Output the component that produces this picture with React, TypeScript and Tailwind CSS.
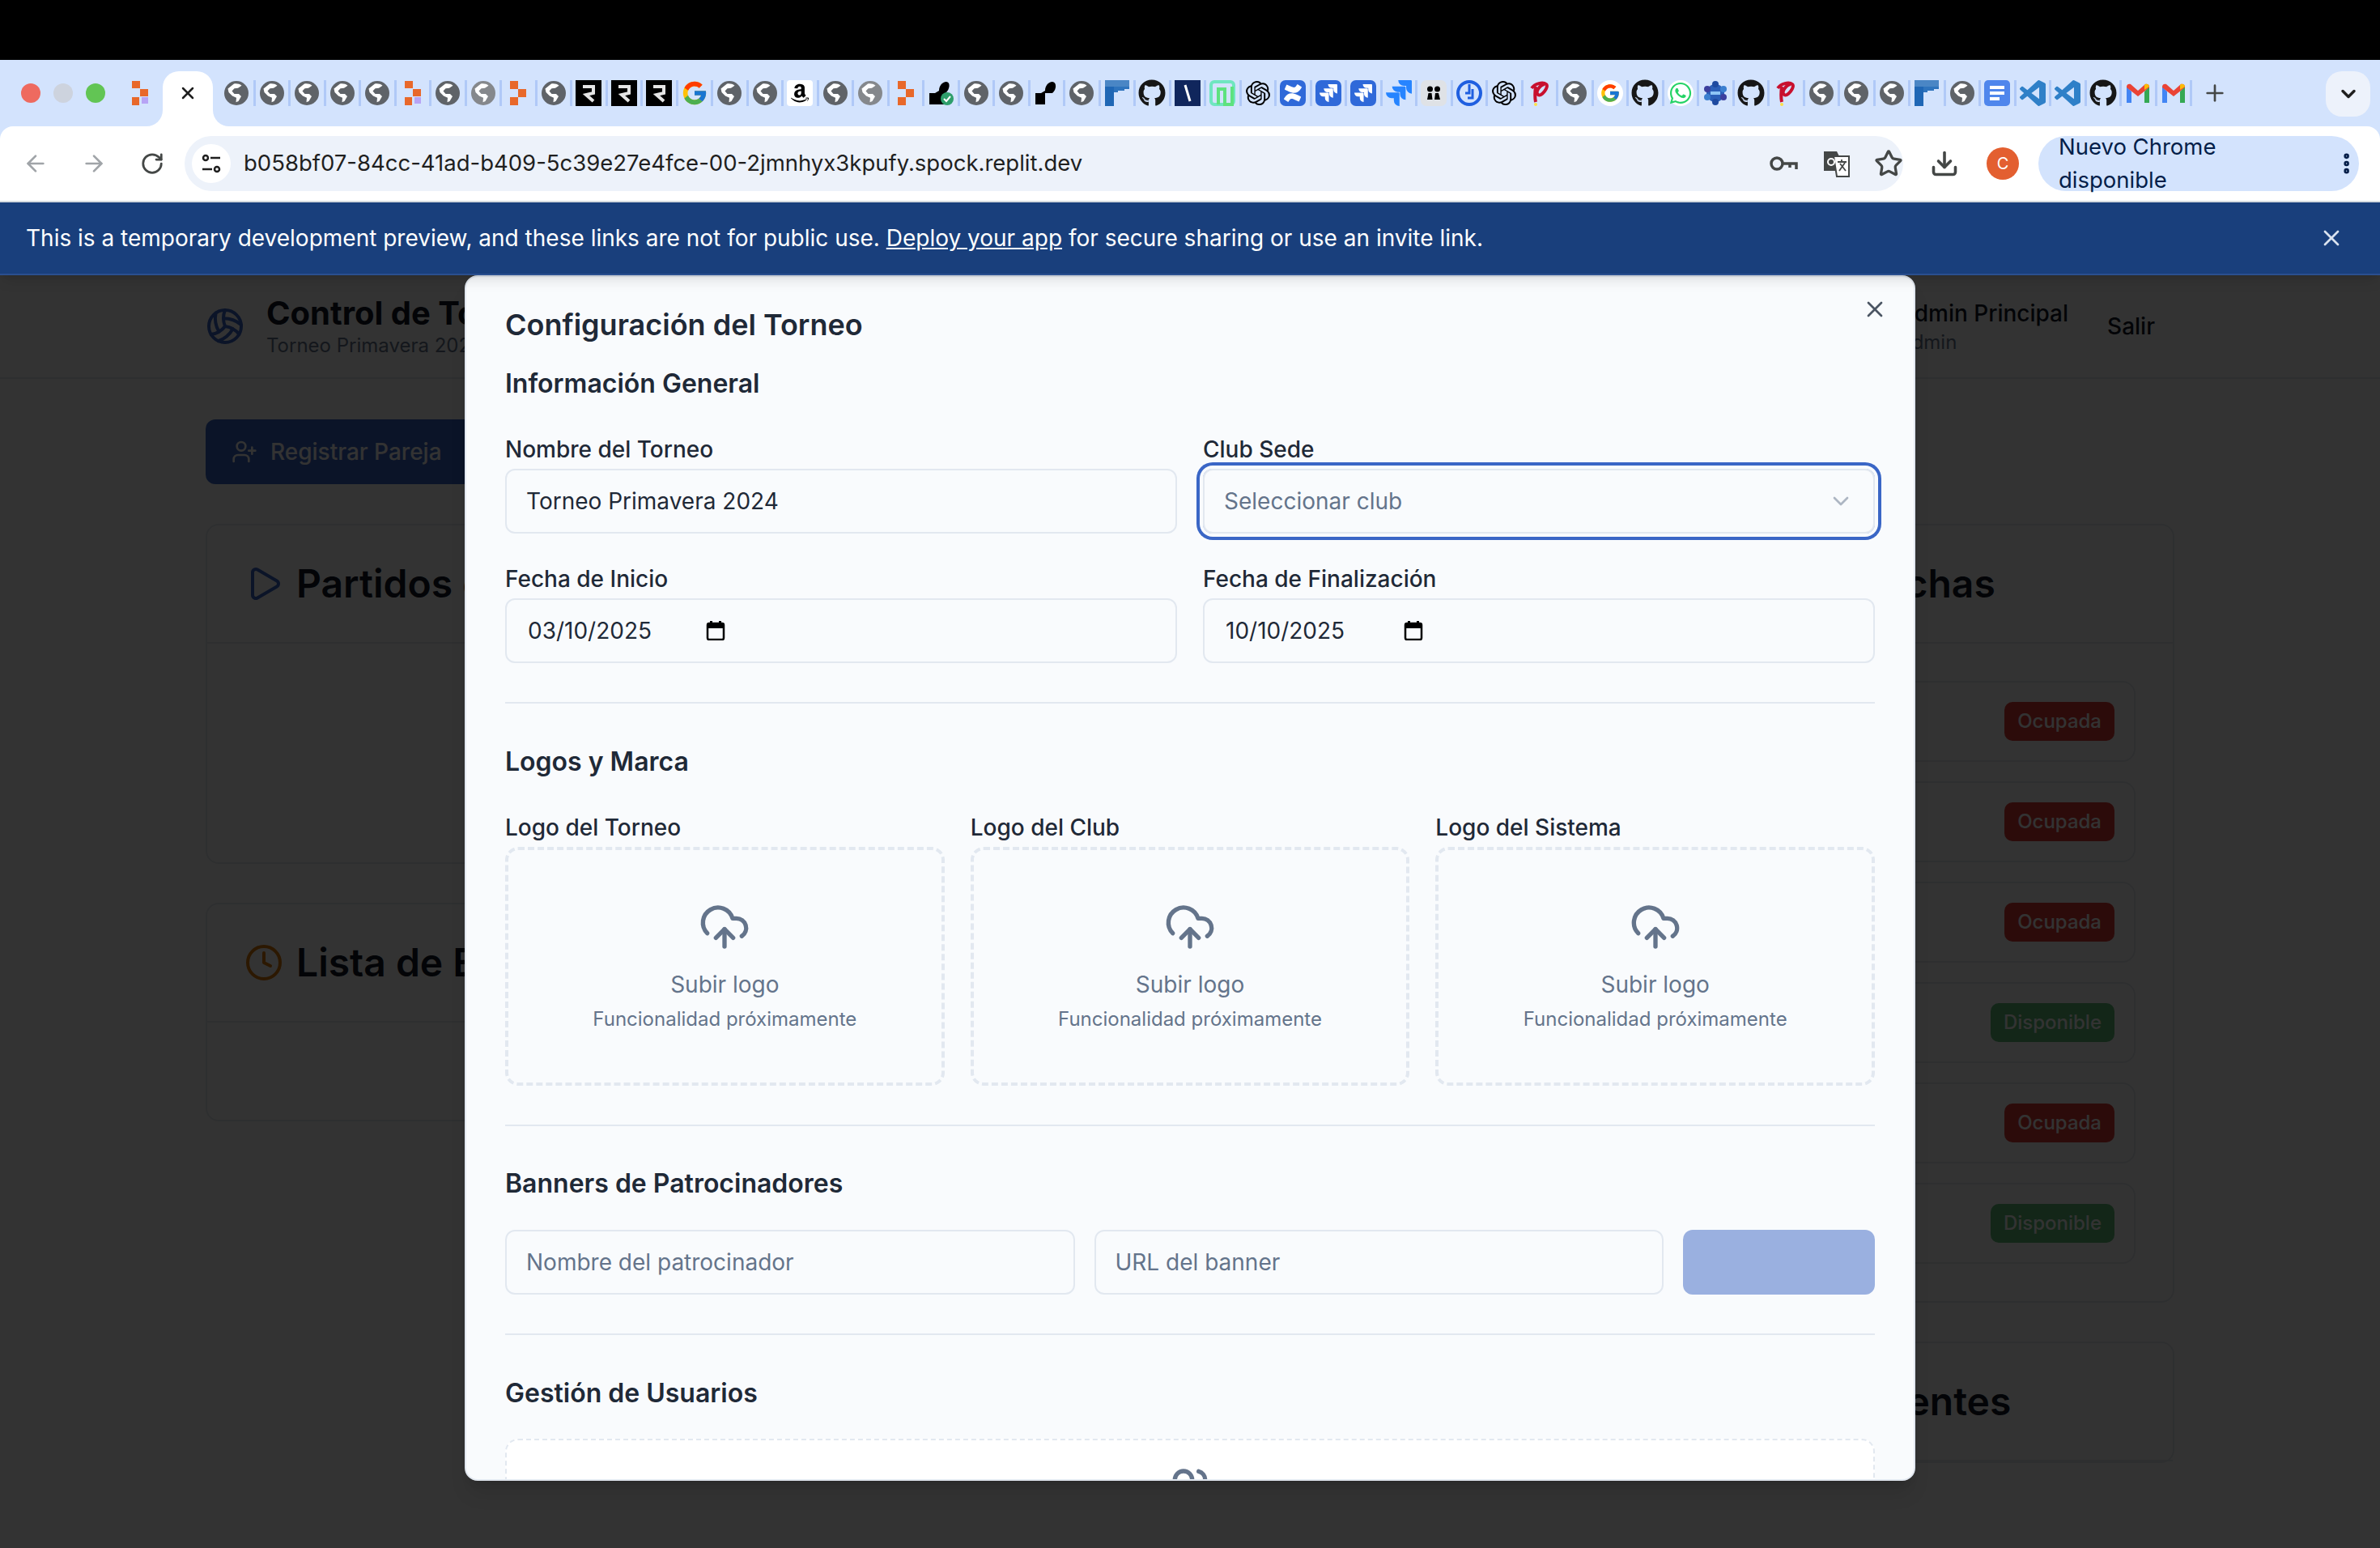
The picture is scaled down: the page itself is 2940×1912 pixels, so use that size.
import {
  ArrowLeft,
  ArrowRight,
  ChevronDown,
  Clock,
  CloudUpload,
  Download,
  EllipsisVertical,
  LayoutGrid,
  ListChecks,
  Play,
  Plus,
  RotateCw,
  Star,
  UserPlus,
  Users,
  Volleyball,
  X,
} from "lucide-react"
import { FaAmazon, FaGithub, FaWhatsapp } from "react-icons/fa"
import { FcGoogle } from "react-icons/fc"
import { SiConfluence, SiJira, SiOpenai } from "react-icons/si"

const tabs = [
  "globe", "globe", "globe", "globe", "globe", "replit", "globe", "globeLight", "replitArrow", "globe",
  "r", "r", "r", "google", "globe", "globe", "amazon", "globe", "globeLight", "replitArrow",
  "blackCheck", "globe", "globe", "black", "globe", "blueF", "github", "navy", "greenN", "openai",
  "confluence", "jiraBox", "jiraBox", "jira", "people", "blueCircle", "openai", "red", "globe", "googleWhite",
  "github", "whatsapp", "gem", "github", "red", "globe", "globe", "globe", "blueF", "globe",
  "docs", "vscode", "vscode", "github", "gmail", "gmail",
]

function Globe({ light }: { light?: boolean }) {
  return (
    <svg width="32" height="32" viewBox="0 0 32 32">
      <circle cx="16" cy="16" r="15" fill={light ? "#85888c" : "#5f6368"} />
      <path
        d="M13 4.5c3.500-.6 7 .2 9.500 2.200l-4.500 3-4.500.5-3 3.300 3 3.500h5.500l3 3-3.500 6-3 1.200.5-5.500-5-2.200-4.500-4.500-1-4.500z"
        fill="#ffffff"
      />
    </svg>
  )
}

function Gmail() {
  return (
    <svg width="32" height="32" viewBox="0 0 32 32">
      <path d="M2 8v20h6V14z" fill="#4285f4" />
      <path d="M24 14v14h6V8z" fill="#34a853" />
      <path d="M2 9l14 11 14-11v-1c0-3-3-4-5-3l-9 8-9-8c-2-1-5 0-5 3z" fill="#ea4335" />
      <path d="M24 12l6-4c0-3-3-4-5-3l-1 1z" fill="#fbbc04" />
    </svg>
  )
}

function Favicon({ kind }: { kind: string }) {
  switch (kind) {
    case "globe":
      return <Globe />
    case "globeLight":
      return <Globe light />
    case "replit":
      return (
        <svg width="20" height="32" viewBox="0 0 20 32">
          <rect x="0" y="1" width="10" height="9" fill="#e8682a" />
          <rect x="10" y="11" width="10" height="9" fill="#e8682a" />
          <rect x="0" y="21" width="9" height="10" fill="#e8682a" />
          <rect x="12" y="21" width="8" height="8" fill="#b7a4f5" />
        </svg>
      )
    case "replitArrow":
      return (
        <svg width="20" height="32" viewBox="0 0 20 32">
          <rect x="0" y="1" width="10" height="10" fill="#e8682a" />
          <rect x="10" y="11" width="10" height="10" fill="#e8682a" />
          <rect x="0" y="21" width="10" height="10" fill="#e8682a" />
        </svg>
      )
    case "r":
      return (
        <svg width="32" height="32" viewBox="0 0 32 32">
          <rect width="32" height="32" fill="#000000" />
          <path d="M9 8h13v8l-9 2 9 8" fill="none" stroke="#e5e5e5" strokeWidth="4" />
        </svg>
      )
    case "google":
      return <FcGoogle size={34} />
    case "googleWhite":
      return (
        <span className="flex h-[32px] w-[32px] items-center justify-center rounded-full bg-white">
          <FcGoogle size={26} />
        </span>
      )
    case "amazon":
      return (
        <span className="flex h-[32px] w-[32px] items-center justify-center rounded-[4px] bg-white">
          <FaAmazon size={26} color="#000000" />
        </span>
      )
    case "blackCheck":
      return (
        <svg width="32" height="32" viewBox="0 0 32 32">
          <path d="M2 30V16h7l5-3c0-6 4-11 9-11s5 9-1 14l-2 14z" fill="#000000" />
          <circle cx="24" cy="23" r="8" fill="#2e9e6b" />
          <path d="M20 23l3 3 5-6" fill="none" stroke="#ffffff" strokeWidth="2" />
        </svg>
      )
    case "black":
      return (
        <svg width="32" height="32" viewBox="0 0 32 32">
          <path d="M2 30V16h7l5-3c0-6 4-11 9-11s6 9 0 14H14v14z" fill="#000000" />
        </svg>
      )
    case "blueF":
      return (
        <svg width="32" height="32" viewBox="0 0 32 32">
          <rect x="1" y="0" width="30" height="8" fill="#4a86c5" />
          <rect x="1" y="8" width="11" height="24" fill="#1f67b5" />
          <path d="M12 8h19v3h-6v2h-8v2h-5z" fill="#2f74bd" />
        </svg>
      )
    case "github":
      return <FaGithub size={34} color="#161616" />
    case "navy":
      return (
        <svg width="32" height="32" viewBox="0 0 32 32">
          <rect width="32" height="32" fill="#10265c" />
          <path d="M13 6l6 20" stroke="#ffffff" strokeWidth="3" />
        </svg>
      )
    case "greenN":
      return (
        <svg width="32" height="32" viewBox="0 0 32 32">
          <rect x="2" y="2" width="28" height="28" rx="4" fill="none" stroke="#6fe6c0" strokeWidth="4" />
          <path d="M11 30V11h8v19h9V8" fill="none" stroke="#5ee27f" strokeWidth="4" />
        </svg>
      )
    case "openai":
      return <SiOpenai size={30} color="#000000" />
    case "confluence":
      return (
        <span className="flex h-[32px] w-[32px] items-center justify-center rounded-[7px] bg-[#2f69d9]">
          <SiConfluence size={22} color="#ffffff" />
        </span>
      )
    case "jiraBox":
      return (
        <span className="flex h-[32px] w-[32px] items-center justify-center rounded-[7px] bg-[#2f69d9]">
          <SiJira size={22} color="#ffffff" />
        </span>
      )
    case "jira":
      return <SiJira size={32} color="#2684ff" />
    case "people":
      return (
        <span className="flex h-[32px] w-[32px] items-center justify-center rounded-[7px] bg-[#dfe2e6]">
          <svg width="20" height="20" viewBox="0 0 20 20">
            <circle cx="5.500" cy="5" r="3.500" fill="#000000" />
            <circle cx="14.500" cy="5" r="3.500" fill="#000000" />
            <path d="M2 18l1.500-8h4l1 8zM11 18l1-8h4l2 8z" fill="#000000" />
          </svg>
        </span>
      )
    case "blueCircle":
      return (
        <svg width="32" height="32" viewBox="0 0 32 32">
          <circle cx="16" cy="16" r="14" fill="none" stroke="#1f5fe0" strokeWidth="4" />
          <path d="M16 5v11h-5M20 11v11h-6" fill="none" stroke="#1f5fe0" strokeWidth="3" />
        </svg>
      )
    case "red":
      return (
        <svg width="32" height="32" viewBox="0 0 32 32">
          <path d="M6 10c4-6 14-8 18-5s-6 16-10 13 2-12 8-13M11 8c-1 7-1 14 0 19" fill="none" stroke="#c8102e" strokeWidth="4" />
          <circle cx="11" cy="30" r="2" fill="#fde047" />
        </svg>
      )
    case "whatsapp":
      return (
        <span className="flex h-[32px] w-[32px] items-center justify-center rounded-full bg-white">
          <FaWhatsapp size={30} color="#25d366" />
        </span>
      )
    case "gem":
      return (
        <svg width="32" height="32" viewBox="0 0 32 32">
          <circle cx="16" cy="16" r="11" fill="#2b5fb8" />
          <circle cx="16" cy="5" r="4" fill="#1e4aa0" />
          <circle cx="16" cy="27" r="4" fill="#1e4aa0" />
          <circle cx="6" cy="11" r="4" fill="#3c3f9e" />
          <circle cx="26" cy="11" r="4" fill="#3b7fd0" />
          <circle cx="6" cy="21" r="4" fill="#3b7fd0" />
          <circle cx="26" cy="21" r="4" fill="#3c3f9e" />
          <rect x="10" y="14" width="12" height="4" fill="#8ec5f5" />
        </svg>
      )
    case "docs":
      return (
        <span className="flex h-[32px] w-[32px] flex-col items-start justify-center gap-[3px] rounded-[5px] bg-[#4f86ec] pl-[7px]">
          <span className="h-[4px] w-[18px] bg-white" />
          <span className="h-[4px] w-[18px] bg-white" />
          <span className="h-[4px] w-[12px] bg-white" />
        </span>
      )
    case "vscode":
      return (
        <svg width="32" height="32" viewBox="0 0 24 24">
          <path
            d="M23.150 2.587L18.210.21a1.494 1.494 0 0 0-1.705.29l-9.460 8.630-4.120-3.128a.999.999 0 0 0-1.276.057L.327 7.261A1 1 0 0 0 .326 8.740L3.899 12 .326 15.260a1 1 0 0 0 .001 1.479L1.650 17.940a.999.999 0 0 0 1.276.057l4.120-3.128 9.460 8.630a1.492 1.492 0 0 0 1.704.290l4.942-2.377A1.500 1.500 0 0 0 24 20.060V3.939a1.500 1.500 0 0 0-.85-1.352zm-5.146 14.861L10.826 12l7.178-5.448v10.896z"
            fill="#2f80c8"
          />
        </svg>
      )
    case "gmail":
      return <Gmail />
    default:
      return null
  }
}

function BrowserChrome() {
  return (
    <div className="relative z-20">
      <div className="h-[74px] bg-black" />

      {/* tab strip */}
      <div className="flex h-[82px] items-center bg-[#d3e3fd]">
        <span className="ml-[26px] h-[24px] w-[24px] rounded-full bg-[#ee6a5f]" />
        <span className="ml-[16px] h-[24px] w-[24px] rounded-full bg-[#cdd3de]" />
        <span className="ml-[16px] h-[24px] w-[24px] rounded-full bg-[#62c554]" />
        <span className="ml-[33px] w-[20px]">
          <Favicon kind="replit" />
        </span>
        <div className="relative ml-[18px] flex h-[68px] w-[62px] items-center justify-center self-end rounded-t-[20px] bg-white pb-[14px]">
          <X size={24} color="#1f1f1f" strokeWidth={2.5} />
          <span className="absolute bottom-0 left-[-20px] h-[20px] w-[20px] bg-white">
            <span className="block h-full w-full rounded-br-[20px] bg-[#d3e3fd]" />
          </span>
          <span className="absolute bottom-0 right-[-20px] h-[20px] w-[20px] bg-white">
            <span className="block h-full w-full rounded-bl-[20px] bg-[#d3e3fd]" />
          </span>
        </div>
        <div className="ml-[9px] flex">
          {tabs.map((kind, i) => (
            <div key={i} className="flex h-[32px] w-[43.5px] flex-none items-center justify-center border-r-[3px] border-[#b0c9f7]">
              <Favicon kind={kind} />
            </div>
          ))}
        </div>
        <Plus size={32} color="#444746" strokeWidth={2} className="ml-[12px]" />
        <div className="mr-[12px] ml-auto flex h-[56px] w-[55px] items-center justify-center self-start mt-[14px] rounded-[20px] bg-[#edf2fb]">
          <ChevronDown size={28} color="#1f1f1f" strokeWidth={3} />
        </div>
      </div>

      {/* toolbar */}
      <div className="bg-[#d3e3fd]">
        <div className="flex h-[94px] items-center rounded-t-[16px] border-b-2 border-[#d5dbe0] bg-white">
          <ArrowLeft size={32} color="#a0a4a8" strokeWidth={2} className="ml-[28px]" />
          <ArrowRight size={32} color="#a0a4a8" strokeWidth={2} className="ml-[40px]" />
          <RotateCw size={30} color="#444746" strokeWidth={2.2} className="ml-[41px]" />
          <div className="ml-[25px] flex h-[68px] w-[2123px] items-center rounded-full bg-[#edf2fa] pl-[9px]">
            <span className="flex h-[48px] w-[48px] items-center justify-center rounded-full bg-white">
              <svg width="26" height="26" viewBox="0 0 26 26" fill="none" stroke="#1f1f1f" strokeWidth="2.500">
                <circle cx="6" cy="6" r="3" />
                <path d="M12 6h12M2 20h12" />
                <circle cx="20" cy="20" r="3" />
              </svg>
            </span>
            <span className="ml-[16px] text-[27.500px] text-[#1f1f1f]">b058bf07-84cc-41ad-b409-5c39e27e4fce-00-2jmnhyx3kpufy.spock.replit.dev</span>
            <svg width="36" height="22" viewBox="0 0 36 22" fill="none" stroke="#444746" strokeWidth="3.500" className="ml-auto">
              <circle cx="10" cy="11" r="7" />
              <path d="M17 11h17v7M26 11v5" />
            </svg>
            <svg width="33" height="34" viewBox="0 0 33 34" className="ml-[31px]">
              <path d="M1 2h16l3 6h-19z M1 8h19v18h-19z" fill="#444746" />
              <path d="M13 8h19v25h-15z" fill="#ffffff" stroke="#444746" strokeWidth="2" />
              <path d="M18 15h11M23 12v3M20 26l7-10M21 17l7 9" fill="none" stroke="#444746" strokeWidth="1.800" />
              <circle cx="10" cy="15" r="4" fill="none" stroke="#ffffff" strokeWidth="2" />
            </svg>
            <Star size={36} color="#444746" strokeWidth={2.2} className="ml-[30px]" />
          </div>
          <Download size={36} color="#444746" strokeWidth={2.4} className="ml-[33px]" />
          <span className="ml-[34px] flex h-[40px] w-[40px] items-center justify-center rounded-full bg-[#e35f30] text-[20px] text-white">C</span>
          <div className="ml-[24px] flex h-[68px] w-[396px] items-center rounded-full bg-[#d3e3fd] pl-[25px]">
            <span className="text-[27.500px] text-[#041e49]">Nuevo Chrome disponible</span>
            <EllipsisVertical size={32} color="#041e49" strokeWidth={3} className="ml-[11px]" />
          </div>
        </div>
      </div>

      {/* replit banner */}
      <div className="flex h-[90px] items-center justify-between border-b-2 border-[#2a4f8f] bg-[#193f7c] pr-[44px] pl-[32px] shadow-lg">
        <p className="text-[28px] text-white">
          This is a temporary development preview, and these links are not for public use.{" "}
          <span className="underline">Deploy your app</span> for secure sharing or use an invite link.
        </p>
        <X size={32} color="#d9e2ef" strokeWidth={2} />
      </div>
    </div>
  )
}

function Badge({ free }: { free: boolean }) {
  return (
    <span className={`flex h-[48px] items-center rounded-[10px] px-[16px] text-[24px] font-medium text-white ${free ? "bg-[#5fbe78]" : "bg-[#dc3a32]"}`}>
      {free ? "Disponible" : "Ocupada"}
    </span>
  )
}

function Dashboard() {
  const courts = [false, false, false, true, false, true]
  return (
    <div className="h-[1572px] overflow-hidden bg-white">
      <header className="flex h-[128px] items-center justify-between border-b-2 border-[#e6ebf0] px-[254px]">
        <div className="flex items-center gap-[27px]">
          <Volleyball size={48} color="#3a66c6" strokeWidth={2} />
          <div>
            <h1 className="text-[40px] leading-[48px] font-bold text-[#111827]">Control de Torneos</h1>
            <p className="text-[24px] leading-[32px] text-[#64748b]">Torneo Primavera 2024</p>
          </div>
        </div>
        <div className="flex items-center">
          <div>
            <p className="text-[28px] leading-[40px] font-medium text-[#111827]">Admin Principal</p>
            <p className="text-[24px] leading-[32px] text-[#64748b]">Admin</p>
          </div>
          <span className="ml-[48px] pr-[24px] text-[28px] font-medium text-[#111827]">Salir</span>
        </div>
      </header>

      <main className="px-[254px] pt-[50px]">
        <button className="flex h-[80px] w-[640px] items-center gap-[16px] rounded-[12px] bg-[#3a66c6] px-[32px] text-[28px] font-medium text-white">
          <UserPlus size={32} />
          Registrar Pareja
        </button>

        <div className="mt-[49px] grid grid-cols-3 gap-[48px]">
          <div className="col-span-2 flex flex-col gap-[48px]">
            <section className="h-[420px] rounded-[16px] border-2 border-[#e6ebf0]">
              <div className="flex h-[146px] items-center gap-[16px] border-b-2 border-[#e6ebf0] px-[46px]">
                <Play size={48} color="#3a66c6" />
                <h2 className="text-[48px] font-semibold text-[#111827]">Partidos en Curso</h2>
              </div>
            </section>
            <section className="rounded-[16px] border-2 border-[#e6ebf0]">
              <div className="flex h-[146px] items-center gap-[16px] border-b-2 border-[#e6ebf0] px-[46px]">
                <Clock size={48} color="#d97706" />
                <h2 className="text-[48px] font-semibold text-[#111827]">Lista de Espera</h2>
              </div>
              <p className="pt-[72px] text-center text-[32px] text-[#64748b]">No hay parejas en lista de espera</p>
            </section>
          </div>

          <div className="flex flex-col gap-[48px]">
            <section className="rounded-[16px] border-2 border-[#e6ebf0]">
              <div className="flex h-[146px] items-center gap-[16px] border-b-2 border-[#e6ebf0] px-[46px]">
                <LayoutGrid size={48} color="#3a66c6" />
                <h2 className="text-[48px] font-semibold text-[#111827]">Estado de Canchas</h2>
              </div>
              <div className="flex flex-col gap-[24px] p-[46px]">
                {courts.map((free, i) => (
                  <div key={i} className="flex h-[100px] items-center justify-between rounded-[16px] border-2 border-[#e6ebf0] px-[24px]">
                    <span className="text-[28px] font-medium text-[#111827]">Cancha {i + 1}</span>
                    <Badge free={free} />
                  </div>
                ))}
              </div>
            </section>
            <section className="rounded-[16px] border-2 border-[#e6ebf0]">
              <div className="flex h-[146px] items-center gap-[16px] border-b-2 border-[#e6ebf0] px-[46px]">
                <ListChecks size={48} color="#3a66c6" />
                <h2 className="text-[48px] font-semibold text-[#111827]">Partidos Pendientes</h2>
              </div>
            </section>
          </div>
        </div>
      </main>
    </div>
  )
}

function Field({ label, children, className = "" }: { label: string; children: React.ReactNode; className?: string }) {
  return (
    <div className={className}>
      <label className="block text-[28px] leading-[28px] font-medium text-[#1f2937]">{label}</label>
      <div className="mt-[10px]">{children}</div>
    </div>
  )
}

const inputClass = "flex h-[80px] items-center rounded-[12px] border-2 border-[#e2e8f0] px-[24px] text-[28px]"

function CalendarIcon() {
  return (
    <svg width="24" height="24" viewBox="0 0 24 24">
      <rect x="2" y="3" width="20" height="20" rx="2" fill="none" stroke="#000000" strokeWidth="2.500" />
      <rect x="2" y="3" width="20" height="6" fill="#000000" />
      <rect x="5" y="0" width="3" height="4" fill="#000000" />
      <rect x="16" y="0" width="3" height="4" fill="#000000" />
    </svg>
  )
}

function DateInput({ value }: { value: string }) {
  return (
    <div className={`${inputClass} text-[#1f2937]`}>
      <span className="ml-[2px] w-[220px]">{value}</span>
      <CalendarIcon />
    </div>
  )
}

function LogoBox({ label }: { label: string }) {
  return (
    <Field label={label}>
      <div className="flex h-[295px] flex-col items-center justify-center rounded-[16px] border-4 border-dashed border-[#e2e8f0]">
        <CloudUpload size={64} color="#64748b" strokeWidth={2} />
        <p className="mt-[19px] text-[28px] leading-[40px] text-[#64748b]">Subir logo</p>
        <p className="mt-[7px] text-[24px] leading-[32px] text-[#64748b]">Funcionalidad próximamente</p>
      </div>
    </Field>
  )
}

function SectionTitle({ children, className }: { children: React.ReactNode; className: string }) {
  return <h3 className={`text-[32px] leading-[40px] font-semibold text-[#1f2937] ${className}`}>{children}</h3>
}

function SettingsModal() {
  return (
    <div className="absolute inset-0 z-10 flex items-start justify-center bg-black/80">
      <div className="relative h-[1489px] w-[1792px] overflow-hidden rounded-[16px] border-2 border-[#e2e8f0] bg-[#f9fbfd] px-[48px] pt-[39px] shadow-xl">
        <X size={32} color="#4b5563" strokeWidth={2} className="absolute top-[24px] right-[32px]" />
        <h2 className="text-[36px] leading-[40px] font-semibold text-[#1f2937]">Configuración del Torneo</h2>

        <SectionTitle className="mt-[33px]">Información General</SectionTitle>
        <div className="mt-[47px] grid grid-cols-2 gap-x-[32px] gap-y-[42px]">
          <Field label="Nombre del Torneo">
            <div className={`${inputClass} text-[#1f2937]`}>Torneo Primavera 2024</div>
          </Field>
          <Field label="Club Sede">
            <div className={`${inputClass} justify-between text-[#64748b] ring-4 ring-[#3a66c6] ring-offset-4 ring-offset-[#f9fbfd]`}>
              Seleccionar club
              <ChevronDown size={32} strokeWidth={2} className="opacity-50" />
            </div>
          </Field>
          <Field label="Fecha de Inicio">
            <DateInput value="03/10/2025" />
          </Field>
          <Field label="Fecha de Finalización">
            <DateInput value="10/10/2025" />
          </Field>
        </div>
        <hr className="mt-[48px] border-t-2 border-[#e2e8f0]" />

        <SectionTitle className="mt-[52px]">Logos y Marca</SectionTitle>
        <div className="mt-[47px] grid grid-cols-3 gap-[32px]">
          <LogoBox label="Logo del Torneo" />
          <LogoBox label="Logo del Club" />
          <LogoBox label="Logo del Sistema" />
        </div>
        <hr className="mt-[48px] border-t-2 border-[#e2e8f0]" />

        <SectionTitle className="mt-[51px]">Banners de Patrocinadores</SectionTitle>
        <div className="mt-[37px] flex gap-[24px]">
          <div className={`${inputClass} flex-1 text-[#64748b]`}>Nombre del patrocinador</div>
          <div className={`${inputClass} flex-1 text-[#64748b]`}>URL del banner</div>
          <div className="h-[80px] w-[237px] rounded-[12px] bg-[#9ab0e0]" />
        </div>
        <hr className="mt-[48px] border-t-2 border-[#e2e8f0]" />

        <SectionTitle className="mt-[52px]">Gestión de Usuarios</SectionTitle>
        <div className="mt-[36px] flex h-[240px] justify-center rounded-[16px] border-2 border-dashed border-[#e2e8f0] bg-white pt-[30px]">
          <Users size={64} color="#64748b" strokeWidth={2} />
        </div>
      </div>
    </div>
  )
}

export default function App() {
  return (
    <div className="h-[1912px] w-[2940px] overflow-hidden [font-family:Inter,sans-serif]">
      <BrowserChrome />
      <div className="relative">
        <Dashboard />
        <SettingsModal />
      </div>
    </div>
  )
}
